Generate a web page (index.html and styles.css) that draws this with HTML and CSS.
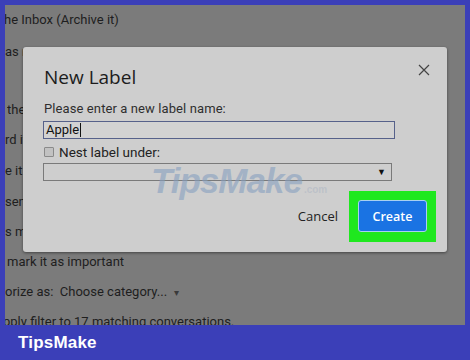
FILE: index.html
```html
<!DOCTYPE html>
<html>
<head>
<meta charset="utf-8">
<link rel="stylesheet" href="styles.css">
</head>
<body>
<div class="frame">
  <div class="screen">
    <div class="bg-lines">
      <div class="bl l1">he Inbox (Archive it)</div>
      <div class="bl l2 under">as read</div>
      <div class="bl l3 under"></div>
      <div class="bl l4 under">the label:</div>
      <div class="bl l5 under">rd it to</div>
      <div class="bl l6 under">e it</div>
      <div class="bl l7 under">send it to Spam</div>
      <div class="bl l8 under">s mark it as important</div>
      <div class="bl l9">mark it as important</div>
      <div class="bl l10">orize as:&nbsp; Choose category... <span class="caret">▾</span></div>
      <div class="bl l11">pply filter to 17 matching conversations.</div>
    </div>
    <div class="dialog">
      <div class="close">
        <svg width="12" height="12" viewBox="0 0 12 12"><path d="M1 1L11 11M11 1L1 11" stroke="#444" stroke-width="1.2" fill="none"/></svg>
      </div>
      <div class="watermark">TipsMake<span class="dotcom">.com</span></div>
      <div class="title">New Label</div>
      <div class="label">Please enter a new label name:</div>
      <div class="input">Apple<span class="cursor"></span></div>
      <div class="nest"><span class="cb"></span><span>Nest label under:</span></div>
      <div class="select"><span class="arrow">▼</span></div>
      <div class="actions">
        <span class="cancel">Cancel</span>
        <div class="highlight"><div class="create">Create</div></div>
      </div>
    </div>
  </div>
  <div class="brand">TipsMake</div>
</div>
</body>
</html>
```

FILE: styles.css
```css
html, body {
  margin: 0;
  padding: 0;
}
body {
  width: 470px;
  height: 360px;
  overflow: hidden;
  background: #3b3fb8;
  font-family: Roboto, "Liberation Sans", sans-serif;
}
.frame {
  padding: 5px 5px 0 5px;
}
.screen {
  position: relative;
  height: 320px;
  background: #7b7b7b;
  overflow: hidden;
}
.bg-lines {
  display: flex;
  flex-direction: column;
  padding-top: 7px;
}
.bl {
  height: 30px;
  line-height: 16px;
  font-size: 13px;
  color: #1e1e1e;
  white-space: nowrap;
}
.under {
  width: 18px;
  overflow: hidden;
}
.l1 { margin-left: -1px; height: 32px; }
.l2 { margin-left: 0; height: 28px; }
.l3 { height: 30px; }
.l4 { margin-left: 2px; width: 16px; }
.l5 { margin-left: 0; height: 31px; }
.l6 { margin-left: 0; height: 31px; }
.l7 { margin-left: 0; height: 30px; }
.l8 { margin-left: 0; height: 30px; }
.l9 { margin-left: 2px; height: 30px; }
.l10 { margin-left: 0; height: 30px; }
.l11 { margin-left: -2px; }
.caret {
  font-size: 10px;
  color: #3a3a3a;
  margin-left: 4px;
}
.dialog {
  position: absolute;
  left: 18px;
  top: 42px;
  width: 424px;
  height: 205px;
  box-sizing: border-box;
  background: #cecece;
  border-radius: 3px;
  box-shadow: 0 1px 3px rgba(0,0,0,0.45);
  padding: 18px 11px 10px 20px;
  display: flex;
  flex-direction: column;
}
.close {
  position: absolute;
  left: 395px;
  top: 17px;
  width: 12px;
  height: 12px;
  line-height: 0;
}
.watermark {
  position: absolute;
  left: 128px;
  top: 114px;
  font-family: "Liberation Sans", Arial, sans-serif;
  font-weight: 700;
  font-style: italic;
  font-size: 35px;
  line-height: 40px;
  letter-spacing: -1px;
  color: rgba(135, 160, 192, 0.6);
  white-space: nowrap;
}
.dotcom {
  font-size: 10px;
  font-style: normal;
  letter-spacing: 0;
  color: rgba(170, 180, 195, 0.5);
  margin-left: 2px;
}
.title {
  font-family: "Open Sans", Roboto, sans-serif;
  font-size: 19px;
  line-height: 24px;
  color: #1c1c1c;
  padding-left: 1px;
}
.label {
  margin-top: 12px;
  font-size: 13px;
  line-height: 16px;
  color: #2e2e2e;
  padding-left: 1px;
  letter-spacing: 0.1px;
}
.input {
  margin-top: 4px;
  width: 352px;
  height: 18px;
  box-sizing: border-box;
  border: 1px solid #56618a;
  background: #d2d2d2;
  font-size: 13px;
  line-height: 16px;
  padding-left: 2px;
  color: #111;
  display: flex;
  align-items: center;
}
.cursor {
  display: inline-block;
  width: 1px;
  height: 14px;
  background: #111;
  margin-left: 1px;
}
.nest {
  margin-top: 6px;
  height: 14px;
  display: flex;
  align-items: center;
  gap: 5px;
  font-size: 13.5px;
  color: #222;
  padding-left: 1px;
}
.cb {
  width: 10px;
  height: 10px;
  box-sizing: border-box;
  border: 1px solid #8a8a8a;
  background: #c2c2c2;
  border-radius: 1px;
}
.select {
  margin-top: 4px;
  width: 349px;
  height: 18px;
  box-sizing: border-box;
  border: 1px solid #7a7a7a;
  display: flex;
  align-items: center;
  justify-content: flex-end;
  padding-right: 5px;
}
.arrow {
  font-size: 9px;
  color: #111;
}
.actions {
  margin-top: 10px;
  display: flex;
  justify-content: flex-end;
  align-items: center;
  gap: 11px;
}
.cancel {
  font-family: "Open Sans", Roboto, sans-serif;
  font-size: 13px;
  color: #222;
  margin-top: -1px;
}
.highlight {
  background: #1fe81f;
  padding: 9px 9px 10px 9px;
}
.create {
  width: 69px;
  height: 32px;
  box-sizing: border-box;
  border: 1px solid #a8d0f0;
  border-radius: 3px;
  background: #1a73e3;
  color: #fff;
  font-family: "Open Sans", Roboto, sans-serif;
  font-weight: 600;
  font-size: 12.5px;
  display: flex;
  align-items: center;
  justify-content: center;
}
.brand {
  height: 35px;
  box-sizing: border-box;
  padding-left: 13px;
  display: flex;
  align-items: center;
  font-family: "Liberation Sans", Arial, sans-serif;
  font-weight: 700;
  font-size: 17px;
  color: #fff;
  letter-spacing: 0.2px;
}
```
